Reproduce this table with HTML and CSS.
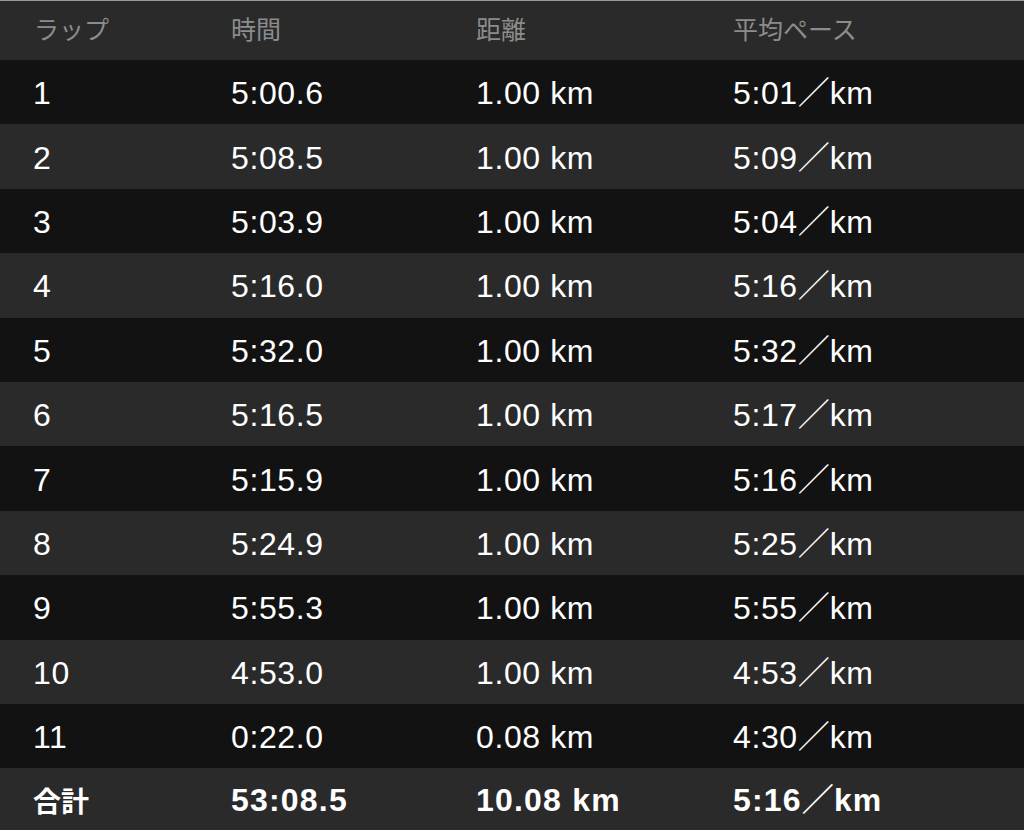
FILE: index.html
```html
<!DOCTYPE html>
<html lang="ja">
<head>
<meta charset="utf-8">
<link rel="stylesheet" href="styles.css">
</head>
<body>
<div class="laps">
  <div class="row head"><span>ラップ</span><span>時間</span><span>距離</span><span>平均ペース</span></div>
  <div class="row dark"><span>1</span><span>5:00.6</span><span>1.00 km</span><span>5:01<i>／</i>km</span></div>
  <div class="row light"><span>2</span><span>5:08.5</span><span>1.00 km</span><span>5:09<i>／</i>km</span></div>
  <div class="row dark"><span>3</span><span>5:03.9</span><span>1.00 km</span><span>5:04<i>／</i>km</span></div>
  <div class="row light"><span>4</span><span>5:16.0</span><span>1.00 km</span><span>5:16<i>／</i>km</span></div>
  <div class="row dark"><span>5</span><span>5:32.0</span><span>1.00 km</span><span>5:32<i>／</i>km</span></div>
  <div class="row light"><span>6</span><span>5:16.5</span><span>1.00 km</span><span>5:17<i>／</i>km</span></div>
  <div class="row dark"><span>7</span><span>5:15.9</span><span>1.00 km</span><span>5:16<i>／</i>km</span></div>
  <div class="row light"><span>8</span><span>5:24.9</span><span>1.00 km</span><span>5:25<i>／</i>km</span></div>
  <div class="row dark"><span>9</span><span>5:55.3</span><span>1.00 km</span><span>5:55<i>／</i>km</span></div>
  <div class="row light"><span>10</span><span>4:53.0</span><span>1.00 km</span><span>4:53<i>／</i>km</span></div>
  <div class="row dark"><span>11</span><span>0:22.0</span><span>0.08 km</span><span>4:30<i>／</i>km</span></div>
  <div class="row light total"><span class="label">合計</span><span>53:08.5</span><span>10.08 km</span><span>5:16<i>／</i>km</span></div>
</div>
</body>
</html>
```

FILE: styles.css
```css
html, body {
  margin: 0;
  padding: 0;
  background: #2a2a2a;
}
body {
  width: 1024px;
  height: 830px;
  overflow: hidden;
  font-family: "Liberation Sans", "Noto Sans CJK JP", sans-serif;
  color: #ffffff;
}
.laps {
  display: flex;
  flex-direction: column;
  border-top: 1px solid #9a9a9a;
}
.row {
  display: grid;
  grid-template-columns: 198px 245px 257px 1fr;
  align-items: center;
  padding-left: 33px;
  padding-top: 2px;
  box-sizing: border-box;
  height: 64.4px;
  font-size: 32px;
  line-height: 36px;
  letter-spacing: 0.6px;
  white-space: nowrap;
}
.row i {
  font-style: normal;
  font-family: "Noto Sans CJK JP", sans-serif;
  letter-spacing: 0;
  line-height: 0;
}
.head {
  height: 59px;
  padding-top: 0;
  background: #2a2a2a;
  color: #8c8c8c;
  font-family: "Noto Sans CJK JP", sans-serif;
  font-size: 25px;
  letter-spacing: 0;
  padding-bottom: 5px;
}
.head span:first-child {
  padding-left: 1px;
}
.dark {
  background: #121212;
}
.light {
  background: #2a2a2a;
}
.total {
  height: 62px;
  font-weight: bold;
  letter-spacing: 1.2px;
}
.total .label {
  font-family: "Noto Sans CJK JP", sans-serif;
  font-size: 28px;
  letter-spacing: 0;
  line-height: 0;
}
```
